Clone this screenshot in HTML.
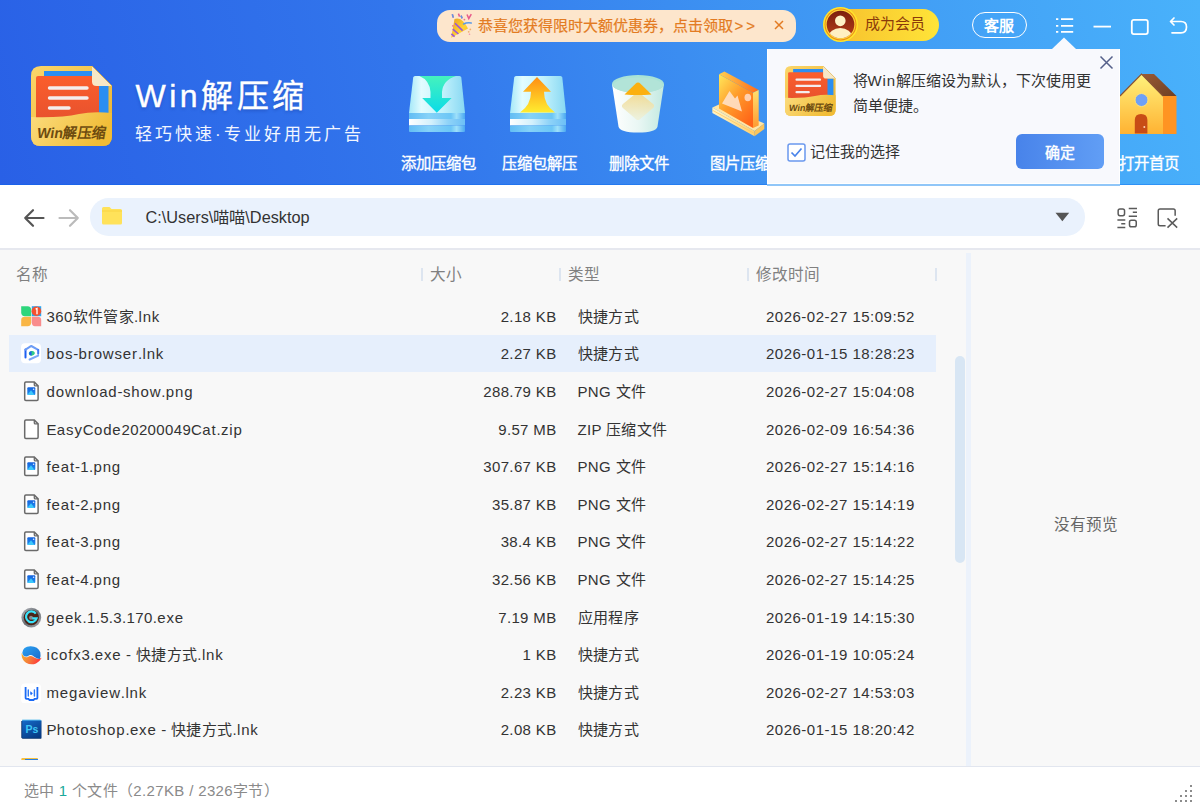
<!DOCTYPE html>
<html lang="zh-CN"><head><meta charset="utf-8">
<style>
*{margin:0;padding:0;box-sizing:border-box}
html,body{width:1200px;height:811px;overflow:hidden;background:#f8f8f8;font-family:"Liberation Sans",sans-serif;color:#333}
svg{display:block}
.abs{position:absolute}
#hdr{position:absolute;left:0;top:0;width:1200px;height:185px;background:linear-gradient(76deg,#2960e6 0%,#3276ec 35%,#3d92f2 62%,#49b2fb 100%)}
#hdrline{position:absolute;left:0;top:184px;width:1200px;height:1.5px;background:rgba(0,100,240,0.35)}
#tb{position:absolute;left:0;top:185px;width:1200px;height:63px;background:#fff}
#tbline{position:absolute;left:0;top:248px;width:1200px;height:2px;background:#e6e8ef}
#list{position:absolute;left:0;top:250px;width:1200px;height:516px;background:#f8f8f8}
#status{position:absolute;left:0;top:766px;width:1200px;height:45px;background:#fff;border-top:1px solid #e2e6ef}
.row{position:absolute;left:0;width:940px;height:37.6px;font-size:15px;color:#333}
.row.sel{left:9px;width:927px;background:#e6effc}
.row.sel span,.row.sel .ic{margin-left:-9px}
.row span{position:absolute;top:10.6px;white-space:nowrap;line-height:17px;letter-spacing:0.35px}
.row b{font-weight:normal;letter-spacing:0.85px}
.row .n{left:46.5px}
.row .s{right:383.5px;text-align:right}
.row.sel .s{right:379.5px;margin-left:0}
.row .t{left:577.5px}
.row .d{left:766px;letter-spacing:0.5px}
.row .ic{position:absolute;left:21px;top:8.5px;width:21px;height:21px}
.hd{position:absolute;top:265.5px;font-size:15.6px;color:#808080;line-height:17px;white-space:nowrap}
.sep{position:absolute;top:268px;width:1.6px;height:13px;background:#dde5f0}
.lbl{position:absolute;top:155px;font-size:15.4px;color:#fff;white-space:nowrap;line-height:17px;-webkit-text-stroke:0.35px #fff}
</style></head><body>
<div id="hdr"></div>
<div id="hdrline"></div>
<!-- logo -->
<svg class="abs" style="left:31px;top:66px" width="81" height="81" viewBox="0 0 81 81">
<defs>
<linearGradient id="lgGold" x1="0" y1="0" x2="1" y2="1"><stop offset="0" stop-color="#fbd66a"/><stop offset="1" stop-color="#e9b02c"/></linearGradient>
<linearGradient id="lgPocket" x1="0" y1="0" x2="1" y2="0.3"><stop offset="0" stop-color="#fbdc7e"/><stop offset="1" stop-color="#f1bc36"/></linearGradient>
<linearGradient id="lgRed" x1="0" y1="0" x2="0" y2="1"><stop offset="0" stop-color="#fb5e2c"/><stop offset="1" stop-color="#e5502e"/></linearGradient>
</defs>
<path d="M10 0H61L81 20V70Q81 80 71 80H10Q0 80 0 70V10Q0 0 10 0Z" fill="url(#lgGold)"/>
<path d="M13 5H61V20H77.5V55H13Z" fill="#2b8ef2"/>
<rect x="5" y="10" width="63" height="50" rx="2" fill="url(#lgRed)"/>
<path d="M18.5 22H56M18.5 32H56M18.5 42H38" stroke="#f4eeee" stroke-width="3.4" stroke-linecap="round"/>
<path d="M0 51Q30 52 48 48Q62 45 81 47V70Q81 80 71 80H10Q0 80 0 70Z" fill="url(#lgPocket)"/>
<path d="M61 0L81 20H65.5Q61 20 61 15.5Z" fill="#f7e7c6"/><path d="M61 0L81 20" stroke="#d9a838" stroke-width="0.8"/>
<text x="5.5" y="71.8" transform="matrix(1 0 -0.16 1 11.5 0)" font-family="Liberation Sans" font-size="14.6" font-weight="bold" fill="#6e4c10" textLength="69" lengthAdjust="spacingAndGlyphs">Win解压缩</text>
</svg>
<div class="abs" style="left:135.5px;top:77px;font-size:32px;color:#fff;letter-spacing:3.5px;line-height:38px;-webkit-text-stroke:0.4px #fff;white-space:nowrap;text-shadow:0 2px 3px rgba(20,50,140,0.35)">Win解压缩</div>
<div class="abs" style="left:135px;top:124.5px;font-size:17px;color:#f2f6ff;letter-spacing:3px;line-height:20px;white-space:nowrap">轻巧快速·专业好用无广告</div>
<!-- promo banner -->
<div class="abs" style="left:437.3px;top:10px;width:359px;height:31.5px;border-radius:13px;background:#fde6cc"></div>
<svg class="abs" style="left:450px;top:13px" width="24" height="26" viewBox="0 0 24 26">
<defs><linearGradient id="pp" x1="0" y1="0" x2="1" y2="1"><stop offset="0" stop-color="#e8a020"/><stop offset="0.6" stop-color="#ffd236"/><stop offset="1" stop-color="#f0b020"/></linearGradient></defs>
<path d="M1.2 24.8L4.5 6Q12 3.5 18 15.5Z" fill="url(#pp)"/>
<path d="M5 10.2L12.6 17.6M2.8 16.2L8.4 21M1.4 20.8L4.6 23.6" stroke="#9b55d8" stroke-width="1.6"/>
<path d="M2.3 1.3L3.3 4.6M8.4 0.6L9.6 3.6M11 2.6L12.2 5.4M17 1.5L18.8 5.5L21.3 1.2" stroke-width="1.5" fill="none" stroke="#e85a8a"/>
<path d="M2.3 1.3L3.3 4.6M11 2.6L12.2 5.4" stroke="#5a9ae8" stroke-width="1.5"/>
<path d="M13.6 11Q17 9.3 21.2 10" stroke="#5a9ae8" stroke-width="1.6" fill="none" stroke-linecap="round"/>
<circle cx="20.3" cy="16.4" r="0.9" fill="#f0b070"/><circle cx="18.7" cy="18.8" r="0.9" fill="#f0b070"/><circle cx="19.5" cy="21.2" r="0.8" fill="#f090b0"/><circle cx="2.9" cy="12.8" r="0.9" fill="#f07090"/><circle cx="14.4" cy="6.6" r="0.9" fill="#f07090"/>
</svg>
<div class="abs" style="left:477.5px;top:17px;font-size:15px;color:#e37b22;line-height:17px;white-space:nowrap;-webkit-text-stroke:0.2px #e37b22">恭喜您获得限时大额优惠券，点击领取<span style="letter-spacing:3px;margin-left:2px">&gt;&gt;</span></div>
<svg class="abs" style="left:774px;top:20px" width="10" height="10" viewBox="0 0 10 10"><path d="M1 1L9 9M9 1L1 9" stroke="#e37b22" stroke-width="1.5"/></svg>
<!-- member -->
<div class="abs" style="left:838px;top:8.6px;width:101px;height:32.6px;border-radius:0 16.3px 16.3px 0;background:linear-gradient(90deg,#f7c22e,#ffe438)"></div>
<svg class="abs" style="left:823px;top:7.3px" width="35" height="35" viewBox="0 0 34.4 34.4">
<defs><linearGradient id="avr" x1="0" y1="0" x2="0" y2="1"><stop offset="0" stop-color="#7c1e0e"/><stop offset="1" stop-color="#b8401a"/></linearGradient>
<clipPath id="avc"><circle cx="17.2" cy="17.2" r="13.6"/></clipPath></defs>
<circle cx="17.2" cy="17.2" r="17.2" fill="#ffe62a"/>
<circle cx="17.2" cy="17.2" r="15.7" fill="#ec8a1a"/>
<circle cx="17.2" cy="17.2" r="14.7" fill="#ffd838"/>
<circle cx="17.2" cy="17.2" r="13.6" fill="url(#avr)"/>
<circle cx="17" cy="13.6" r="5.2" fill="#fff2c6"/>
<ellipse cx="17" cy="29.8" rx="11.6" ry="9.1" fill="#fff0c2" clip-path="url(#avc)"/>
</svg>
<div class="abs" style="left:865px;top:15px;font-size:15px;color:#8a3a0a;line-height:17px;white-space:nowrap">成为会员</div>
<!-- kefu -->
<div class="abs" style="left:971.8px;top:12.3px;width:55.5px;height:25.5px;border:1.8px solid #fff;border-radius:13px"></div>
<div class="abs" style="left:983.5px;top:17px;font-size:15px;color:#fff;font-weight:bold;line-height:17px;white-space:nowrap">客服</div>
<!-- window controls -->
<svg class="abs" style="left:1050px;top:12px" width="145" height="26" viewBox="0 0 145 26">
<path d="M6 7.2H8.3M6 13.9H8.3M6 19.9H8.3M11 7.2H23.2M11 13.9H23.2M11 19.9H23.2" stroke="#fff" stroke-width="1.7"/>
<path d="M43.5 14.6H61" stroke="#fff" stroke-width="1.8"/>
<rect x="81.8" y="7.8" width="16" height="14.3" rx="2" fill="none" stroke="#fff" stroke-width="1.8"/>
<path d="M124 6L120.5 9.5L124 13M121 9.5H131Q136.5 9.5 136.5 15Q136.5 20.8 131 20.8H122" fill="none" stroke="#fff" stroke-width="1.7" stroke-linejoin="round" stroke-linecap="round"/>
</svg>

<div id="tb"></div>
<div id="tbline"></div>
<svg class="abs" style="left:22px;top:207px" width="60" height="22" viewBox="0 0 60 22">
<path d="M11 3.2L3.2 11L11 18.8M3.2 11H21.5" fill="none" stroke="#555" stroke-width="2.2" stroke-linecap="round" stroke-linejoin="round"/>
<path d="M48 3.2L55.8 11L48 18.8M55.8 11H37.5" fill="none" stroke="#bbb" stroke-width="2.2" stroke-linecap="round" stroke-linejoin="round"/>
</svg>
<div class="abs" style="left:89.5px;top:198.2px;width:995px;height:37.4px;border-radius:18.7px;background:#eaf2fd"></div>
<svg class="abs" style="left:101px;top:206px" width="22" height="19" viewBox="0 0 22 19">
<path d="M1 2.5Q1 1 2.5 1H8.5L10.5 3H19.5Q21 3 21 4.5V17Q21 18.5 19.5 18.5H2.5Q1 18.5 1 17Z" fill="#ffe25a"/>
<path d="M1 5H21" stroke="#f8d23c" stroke-width="0.8"/>
</svg>
<div class="abs" style="left:145.5px;top:208px;font-size:16.3px;color:#333;line-height:19px;white-space:nowrap">C:\Users\喵喵\Desktop</div>
<svg class="abs" style="left:1055px;top:212px" width="15" height="10" viewBox="0 0 15 10"><path d="M0.5 0.8H14.2L7.35 9.3Z" fill="#555"/></svg>
<svg class="abs" style="left:1116px;top:207px" width="64" height="23" viewBox="0 0 64 23">
<g fill="none" stroke="#5a5a5a" stroke-width="1.5">
<rect x="2.15" y="2" width="6.4" height="6.65" rx="1.8"/>
<path d="M12.75 1.4H21M16.8 5.3H21M12.75 9.25H21M1.4 13H9.3M5.25 16.75H9.3M1.4 20.5H9.3"/>
<rect x="13.5" y="13.25" width="6.75" height="6.6" rx="1.8"/>
<path d="M49.6 18.65H44Q42.25 18.65 42.25 16.9V3.75Q42.25 2 44 2H57.4Q59.15 2 59.15 3.75V8.75"/>
<path d="M51.5 11.4L61.2 20.6M61.2 11.4L51.5 20.6"/>
</g>
</svg>

<div id="list"></div>
<div class="hd" style="left:16px">名称</div>
<div class="sep" style="left:421px"></div><div class="hd" style="left:430px">大小</div>
<div class="sep" style="left:559px"></div><div class="hd" style="left:567.5px">类型</div>
<div class="sep" style="left:747px"></div><div class="hd" style="left:756px">修改时间</div>
<div class="sep" style="left:935px"></div>

<div class="row" style="top:297.3px"><svg class="ic" viewBox="0 0 21 21"><path d="M0.2 0.2H6.5Q10.2 0.2 10.2 4V10.2H4Q0.2 10.2 0.2 6.5Z" fill="#2ed67c"/><path d="M10.8 0.2H20.2V10.2H10.8Z" fill="#2aa6f2"/><path d="M0.2 20.2V14Q0.2 10.8 4 10.8H10.2V16.5Q10.2 20.2 6.5 20.2Z" fill="#f9b646"/><path d="M20.2 20.2V14Q20.2 10.8 16.5 10.8H10.8V16.5Q10.8 20.2 14 20.2Z" fill="#f98c8c"/><circle cx="15.4" cy="5.2" r="4.8" fill="#f4512e"/><path d="M14.6 3.2L16 2.6V8.2" fill="none" stroke="#fff" stroke-width="1.3"/></svg><span class="n">360软件管家.<b>lnk</b></span><span class="s">2.18 KB</span><span class="t">快捷方式</span><span class="d">2026-02-27 15:09:52</span></div>
<div class="row sel" style="top:334.90000000000003px"><svg class="ic" viewBox="0 0 21 21"><rect x="0" y="0.3" width="20" height="20" rx="4" fill="#fff"/><g fill="none" stroke-width="2" stroke-linecap="round"><path d="M4.5 6.6V14.4" stroke="#1d5ff2"/><path d="M4.5 6.6L9.5 3.3" stroke="#6a9af6"/><path d="M10.3 3L17.2 6.8" stroke="#6d9df6"/><path d="M17.2 7V10.8" stroke="#3f7af4"/><path d="M8.6 16.5L17.2 12.6" stroke="#7ba7f7"/></g><ellipse cx="10.8" cy="10.3" rx="3" ry="2.3" transform="rotate(-15 10.8 10.3)" fill="#2ecb8a"/><path d="M8 10.8Q7.8 8.6 10.5 8L10.6 12.6Q8.3 12.8 8 10.8Z" fill="#1f5fe8"/></svg><span class="n"><b>bos</b>-<b>browser</b>.<b>lnk</b></span><span class="s">2.27 KB</span><span class="t">快捷方式</span><span class="d">2026-01-15 18:28:23</span></div>
<div class="row" style="top:372.5px"><svg class="ic" viewBox="0 0 21 21"><path d="M4.9 1.1H13.3L17.1 4.9V18.2Q17.1 19.4 15.9 19.4H4.9Q3.7 19.4 3.7 18.2V2.3Q3.7 1.1 4.9 1.1Z" fill="#fff" stroke="#6a6a6a" stroke-width="1.5"/><path d="M13.3 1.1V3.9Q13.3 4.9 14.3 4.9H17.1" fill="none" stroke="#6a6a6a" stroke-width="1.3"/><defs><linearGradient id="pg" x1="0" y1="0" x2="0" y2="1"><stop offset="0" stop-color="#1462de"/><stop offset="1" stop-color="#1e8ef0"/></linearGradient></defs><rect x="6.3" y="6.3" width="8" height="7.8" rx="1" fill="url(#pg)"/><path d="M6.3 14.1L10 9.2L13.5 14.1Z" fill="#3cc8fb"/><circle cx="12.6" cy="8.3" r="0.8" fill="#e0e8ff"/></svg><span class="n"><b>download</b>-<b>show</b>.<b>png</b></span><span class="s">288.79 KB</span><span class="t">PNG 文件</span><span class="d">2026-02-27 15:04:08</span></div>
<div class="row" style="top:410.1px"><svg class="ic" viewBox="0 0 21 21"><path d="M4.9 1.1H13.3L17.1 4.9V18.2Q17.1 19.4 15.9 19.4H4.9Q3.7 19.4 3.7 18.2V2.3Q3.7 1.1 4.9 1.1Z" fill="#fff" stroke="#6a6a6a" stroke-width="1.5"/><path d="M13.3 1.1V3.9Q13.3 4.9 14.3 4.9H17.1" fill="none" stroke="#6a6a6a" stroke-width="1.3"/></svg><span class="n">E<b>asy</b>C<b>ode</b>20200049C<b>at</b>.<b>zip</b></span><span class="s">9.57 MB</span><span class="t">ZIP 压缩文件</span><span class="d">2026-02-09 16:54:36</span></div>
<div class="row" style="top:447.70000000000005px"><svg class="ic" viewBox="0 0 21 21"><path d="M4.9 1.1H13.3L17.1 4.9V18.2Q17.1 19.4 15.9 19.4H4.9Q3.7 19.4 3.7 18.2V2.3Q3.7 1.1 4.9 1.1Z" fill="#fff" stroke="#6a6a6a" stroke-width="1.5"/><path d="M13.3 1.1V3.9Q13.3 4.9 14.3 4.9H17.1" fill="none" stroke="#6a6a6a" stroke-width="1.3"/><defs><linearGradient id="pg" x1="0" y1="0" x2="0" y2="1"><stop offset="0" stop-color="#1462de"/><stop offset="1" stop-color="#1e8ef0"/></linearGradient></defs><rect x="6.3" y="6.3" width="8" height="7.8" rx="1" fill="url(#pg)"/><path d="M6.3 14.1L10 9.2L13.5 14.1Z" fill="#3cc8fb"/><circle cx="12.6" cy="8.3" r="0.8" fill="#e0e8ff"/></svg><span class="n"><b>feat</b>-1.<b>png</b></span><span class="s">307.67 KB</span><span class="t">PNG 文件</span><span class="d">2026-02-27 15:14:16</span></div>
<div class="row" style="top:485.3px"><svg class="ic" viewBox="0 0 21 21"><path d="M4.9 1.1H13.3L17.1 4.9V18.2Q17.1 19.4 15.9 19.4H4.9Q3.7 19.4 3.7 18.2V2.3Q3.7 1.1 4.9 1.1Z" fill="#fff" stroke="#6a6a6a" stroke-width="1.5"/><path d="M13.3 1.1V3.9Q13.3 4.9 14.3 4.9H17.1" fill="none" stroke="#6a6a6a" stroke-width="1.3"/><defs><linearGradient id="pg" x1="0" y1="0" x2="0" y2="1"><stop offset="0" stop-color="#1462de"/><stop offset="1" stop-color="#1e8ef0"/></linearGradient></defs><rect x="6.3" y="6.3" width="8" height="7.8" rx="1" fill="url(#pg)"/><path d="M6.3 14.1L10 9.2L13.5 14.1Z" fill="#3cc8fb"/><circle cx="12.6" cy="8.3" r="0.8" fill="#e0e8ff"/></svg><span class="n"><b>feat</b>-2.<b>png</b></span><span class="s">35.87 KB</span><span class="t">PNG 文件</span><span class="d">2026-02-27 15:14:19</span></div>
<div class="row" style="top:522.9000000000001px"><svg class="ic" viewBox="0 0 21 21"><path d="M4.9 1.1H13.3L17.1 4.9V18.2Q17.1 19.4 15.9 19.4H4.9Q3.7 19.4 3.7 18.2V2.3Q3.7 1.1 4.9 1.1Z" fill="#fff" stroke="#6a6a6a" stroke-width="1.5"/><path d="M13.3 1.1V3.9Q13.3 4.9 14.3 4.9H17.1" fill="none" stroke="#6a6a6a" stroke-width="1.3"/><defs><linearGradient id="pg" x1="0" y1="0" x2="0" y2="1"><stop offset="0" stop-color="#1462de"/><stop offset="1" stop-color="#1e8ef0"/></linearGradient></defs><rect x="6.3" y="6.3" width="8" height="7.8" rx="1" fill="url(#pg)"/><path d="M6.3 14.1L10 9.2L13.5 14.1Z" fill="#3cc8fb"/><circle cx="12.6" cy="8.3" r="0.8" fill="#e0e8ff"/></svg><span class="n"><b>feat</b>-3.<b>png</b></span><span class="s">38.4 KB</span><span class="t">PNG 文件</span><span class="d">2026-02-27 15:14:22</span></div>
<div class="row" style="top:560.5px"><svg class="ic" viewBox="0 0 21 21"><path d="M4.9 1.1H13.3L17.1 4.9V18.2Q17.1 19.4 15.9 19.4H4.9Q3.7 19.4 3.7 18.2V2.3Q3.7 1.1 4.9 1.1Z" fill="#fff" stroke="#6a6a6a" stroke-width="1.5"/><path d="M13.3 1.1V3.9Q13.3 4.9 14.3 4.9H17.1" fill="none" stroke="#6a6a6a" stroke-width="1.3"/><defs><linearGradient id="pg" x1="0" y1="0" x2="0" y2="1"><stop offset="0" stop-color="#1462de"/><stop offset="1" stop-color="#1e8ef0"/></linearGradient></defs><rect x="6.3" y="6.3" width="8" height="7.8" rx="1" fill="url(#pg)"/><path d="M6.3 14.1L10 9.2L13.5 14.1Z" fill="#3cc8fb"/><circle cx="12.6" cy="8.3" r="0.8" fill="#e0e8ff"/></svg><span class="n"><b>feat</b>-4.<b>png</b></span><span class="s">32.56 KB</span><span class="t">PNG 文件</span><span class="d">2026-02-27 15:14:25</span></div>
<div class="row" style="top:598.1px"><svg class="ic" viewBox="0 0 21 21"><defs><linearGradient id="gk" x1="0" y1="0" x2="1" y2="1"><stop offset="0" stop-color="#b8bcc2"/><stop offset="0.5" stop-color="#6a6e74"/><stop offset="1" stop-color="#a8acb2"/></linearGradient></defs><circle cx="10.3" cy="10.6" r="9.9" fill="url(#gk)"/><circle cx="10.3" cy="10.6" r="7.6" fill="#4a2418"/><circle cx="10" cy="10.8" r="2" fill="#8a8a90"/><path d="M14.8 6.6A5.4 5.4 0 1 0 15.6 11.3H11.2" fill="none" stroke="#3ae2fa" stroke-width="2.2"/></svg><span class="n"><b>geek</b>.1.5.3.170.<b>exe</b></span><span class="s">7.19 MB</span><span class="t">应用程序</span><span class="d">2026-01-19 14:15:30</span></div>
<div class="row" style="top:635.7px"><svg class="ic" viewBox="0 0 21 21"><defs><linearGradient id="ix" x1="0" y1="0" x2="1" y2="0.3"><stop offset="0" stop-color="#f2b22c"/><stop offset="0.55" stop-color="#f57a3a"/><stop offset="1" stop-color="#ff3a3a"/></linearGradient><linearGradient id="ixb" x1="0" y1="0" x2="1" y2="1"><stop offset="0" stop-color="#2ba2f2"/><stop offset="1" stop-color="#1a6ccc"/></linearGradient></defs><path d="M0.6 9Q0.2 15.5 5 18.8Q10 21.5 15 19.5Q18.5 18 20.7 13.8Q16.5 15.8 12.8 13.3Q9.5 11 6.8 13Q3 14.2 0.6 9Z" fill="url(#ix)"/><path d="M1.3 9Q1.8 2.6 9.5 2.3Q17 2.2 19.3 8.3Q20 11.5 18.8 15Q15.5 14.8 12.8 12.5Q9.5 9.8 6.8 12.2Q2.5 13.8 1.3 9Z" fill="url(#ixb)"/></svg><span class="n"><b>icofx</b>3.<b>exe</b> - 快捷方式.<b>lnk</b></span><span class="s">1 KB</span><span class="t">快捷方式</span><span class="d">2026-01-19 10:05:24</span></div>
<div class="row" style="top:673.3px"><svg class="ic" viewBox="0 0 21 21"><rect x="0" y="1.5" width="20" height="20" rx="4" fill="#fff"/><path d="M4.6 5V16Q4.6 16.8 5.5 16.8H7.5L8.5 18H12.5L13.5 16.8H15.5Q16.4 16.8 16.4 16V5" fill="none" stroke="#1a6af5" stroke-width="1.8"/><path d="M7.3 8V14M13.4 8V14" stroke="#2a78f6" stroke-width="1.4" stroke-linecap="round"/><path d="M9.3 9.3L11.8 11.3L10 13.2Q8.8 12 9.3 9.3Z" fill="#1a6af5"/></svg><span class="n"><b>megaview</b>.<b>lnk</b></span><span class="s">2.23 KB</span><span class="t">快捷方式</span><span class="d">2026-02-27 14:53:03</span></div>
<div class="row" style="top:710.9000000000001px"><svg class="ic" viewBox="0 0 21 21"><defs><linearGradient id="psg" x1="0.2" y1="0" x2="0.8" y2="1"><stop offset="0" stop-color="#1467c4"/><stop offset="1" stop-color="#063a82"/></linearGradient></defs><path d="M0.3 2V18.8L1.5 19.8H20.3V2Z" fill="#06306c"/><rect x="1.2" y="1.1" width="19.1" height="17.8" fill="url(#psg)"/><path d="M1.2 1.1H19.2L20.3 2" stroke="#4ab8f0" stroke-width="0.9" fill="none"/><text x="10.8" y="14.3" font-size="10.5" font-weight="bold" fill="#3ec6f6" text-anchor="middle" font-family="Liberation Sans">Ps</text></svg><span class="n">P<b>hotoshop</b>.<b>exe</b> - 快捷方式.<b>lnk</b></span><span class="s">2.08 KB</span><span class="t">快捷方式</span><span class="d">2026-01-15 18:20:42</span></div>
<div class="row" style="top:748.5px;height:11.5px;overflow:hidden"><svg class="ic" style="top:9px" viewBox="0 0 21 21"><rect x="0.3" y="0" width="16.7" height="3" rx="1" fill="#f5c040"/><rect x="4" y="1" width="13" height="2" fill="#2a80e0"/></svg></div>
<div class="abs" style="left:955.3px;top:356.4px;width:10.2px;height:206.6px;border-radius:5px;background:#d8e6f4"></div>
<div class="abs" style="left:965.5px;top:253px;width:5px;height:513px;background:#ecf2fb"></div>
<div class="abs" style="left:1054px;top:516px;font-size:15.6px;color:#666;line-height:17px;white-space:nowrap">没有预览</div>

<div id="status"></div>
<div class="abs" style="left:23.5px;top:781.5px;font-size:15px;color:#8a8a8a;line-height:17px;white-space:nowrap;letter-spacing:0.35px">选中 <span style="color:#1aa99b">1</span> 个文件（2.27KB / 2326字节）</div>
<svg class="abs" style="left:1172px;top:783px" width="22" height="22" viewBox="0 0 22 22" fill="#8c8c8c">
<rect x="18" y="2" width="2" height="2"/><rect x="18" y="7" width="2" height="2"/><rect x="13" y="7" width="2" height="2"/>
<rect x="18" y="12" width="2" height="2"/><rect x="13" y="12" width="2" height="2"/><rect x="8" y="12" width="2" height="2"/>
<rect x="18" y="17" width="2" height="2"/><rect x="13" y="17" width="2" height="2"/><rect x="8" y="17" width="2" height="2"/><rect x="3" y="17" width="2" height="2"/>
</svg>

<!-- add -->
<svg class="abs" style="left:409px;top:76px" width="57" height="57" viewBox="0 0 57 57">
<defs>
<linearGradient id="bxTop" x1="0" y1="0" x2="1" y2="0"><stop offset="0" stop-color="#a4e8f8"/><stop offset="0.22" stop-color="#e2fcff"/><stop offset="0.6" stop-color="#c2f2fc"/><stop offset="1" stop-color="#88d8f3"/></linearGradient>
<linearGradient id="bxBand" x1="0" y1="0" x2="1" y2="0"><stop offset="0" stop-color="#ffffff"/><stop offset="0.4" stop-color="#d2f0fc"/><stop offset="0.7" stop-color="#8fd3f8"/><stop offset="1" stop-color="#6cc0f6"/></linearGradient>
<linearGradient id="bxS1" x1="0" y1="0" x2="1" y2="0"><stop offset="0" stop-color="#62bdf4"/><stop offset="0.35" stop-color="#86d2f8"/><stop offset="0.75" stop-color="#6cc6f6"/><stop offset="0.85" stop-color="#9ee0fa"/><stop offset="1" stop-color="#4aa8f2"/></linearGradient>
<linearGradient id="arDn" x1="0" y1="0" x2="0" y2="1"><stop offset="0" stop-color="#45f2bd"/><stop offset="1" stop-color="#0adbe8"/></linearGradient>
<linearGradient id="arUp" x1="0" y1="0" x2="0" y2="1"><stop offset="0" stop-color="#ff8e12"/><stop offset="1" stop-color="#ffec30"/></linearGradient>
</defs>
<path d="M6 0H50.5Q52 0 52.3 1.5L56 37H0L4.2 1.5Q4.5 0 6 0Z" fill="url(#bxTop)"/>
<path d="M10.3 0H47Q34 4 33 16V22.1H42.6L27.8 36.8L13.2 22.1H21.5V16Q20.5 4 10.3 0Z" fill="url(#arDn)"/>
<rect x="0" y="37" width="56" height="6" fill="url(#bxS1)"/>
<rect x="0" y="43" width="56" height="6.5" fill="url(#bxBand)"/>
<rect x="0" y="49.5" width="56" height="6.5" rx="1" fill="url(#bxS1)"/>
</svg>
<div class="lbl" style="left:401px">添加压缩包</div>
<!-- extract -->
<svg class="abs" style="left:510px;top:76px" width="57" height="57" viewBox="0 0 57 57">
<path d="M6 0H50.5Q52 0 52.3 1.5L56 37H0L4.2 1.5Q4.5 0 6 0Z" fill="url(#bxTop)"/>
<path d="M27 1L41 15.8H34Q34 29 45 36.4H10Q21 29 21 15.8H13Z" fill="url(#arUp)"/>
<rect x="0" y="37" width="56" height="6" fill="url(#bxS1)"/>
<rect x="0" y="43" width="56" height="6.5" fill="url(#bxBand)"/>
<rect x="0" y="49.5" width="56" height="6.5" rx="1" fill="url(#bxS1)"/>
</svg>
<div class="lbl" style="left:502px">压缩包解压</div>
<!-- trash -->
<svg class="abs" style="left:611px;top:74px" width="54" height="60" viewBox="0 0 54 60">
<defs>
<linearGradient id="trB" x1="0" y1="0" x2="1" y2="0"><stop offset="0" stop-color="#ffffff"/><stop offset="0.5" stop-color="#eaf7f4"/><stop offset="1" stop-color="#c2e9e0"/></linearGradient>
<linearGradient id="trD" x1="0" y1="0" x2="0" y2="1"><stop offset="0" stop-color="#f3d98c"/><stop offset="1" stop-color="#eef0d6"/></linearGradient>
</defs>
<path d="M1 10L7.5 52.5Q9 58.5 27 58.5Q45 58.5 46.5 52.5L53 10Z" fill="url(#trB)"/>
<ellipse cx="27" cy="10" rx="26" ry="9" fill="#a9e3d6"/>
<ellipse cx="27" cy="11.2" rx="24.5" ry="7.8" fill="#b2e4d8"/>
<path d="M27 21L40.5 32L27 43.5L13.5 32Z" fill="url(#trD)" stroke="url(#trD)" stroke-width="5" stroke-linejoin="round" opacity="0.85"/>
<path d="M13.5 20.5L24.5 9.8Q27 7.4 29.5 9.8L40.5 20.5Q27 21.5 13.5 20.5Z" fill="#fbb010"/>
</svg>
<div class="lbl" style="left:609px">删除文件</div>
<!-- image -->
<svg class="abs" style="left:711px;top:70px" width="56" height="68" viewBox="0 0 56 68">
<defs>
<linearGradient id="imF" x1="0" y1="0" x2="0.8" y2="1"><stop offset="0" stop-color="#ffe85a"/><stop offset="0.5" stop-color="#ff9a2a"/><stop offset="1" stop-color="#ff6418"/></linearGradient>
<linearGradient id="imT" x1="0" y1="0" x2="1" y2="0"><stop offset="0" stop-color="#ffd050"/><stop offset="1" stop-color="#ff6a1a"/></linearGradient>
<linearGradient id="imR" x1="0" y1="0" x2="0" y2="1"><stop offset="0" stop-color="#ffe070"/><stop offset="1" stop-color="#ff9a30"/></linearGradient>
<linearGradient id="imS" x1="0" y1="0" x2="1" y2="0"><stop offset="0" stop-color="#fff4c8"/><stop offset="1" stop-color="#ffd070"/></linearGradient>
</defs>
<path d="M1.4 37.6L8 34.5L53.3 53.5L43.5 61Z" fill="#ffe6a6"/>
<path d="M1.4 37.6L43.5 61V66.3L1.4 43Z" fill="url(#imS)"/>
<path d="M1.4 40.2L43.5 63.6" stroke="#ffc860" stroke-width="0.8"/>
<path d="M43.5 61L53.3 53.5V58.9L43.5 66.3Z" fill="#f9c55e"/>
<path d="M8 4.3L42 22.8V58L8 38.5Z" fill="url(#imF)"/>
<path d="M8 4.3L13.4 1.5L47.7 20L42 22.8Z" fill="url(#imT)"/>
<path d="M42 22.8L47.7 20V55.5L42 58Z" fill="url(#imR)"/>
<path d="M11 33.5L18.5 21L24 28.5L26.5 25.5L31 41.5Z" fill="#ffe0c4" opacity="0.92"/>
<ellipse cx="36.8" cy="27.5" rx="3.3" ry="3.8" fill="#ffd6bc" opacity="0.92"/>
</svg>
<div class="lbl" style="left:710px">图片压缩</div>
<!-- house -->
<svg class="abs" style="left:1114px;top:72px" width="64" height="64" viewBox="0 0 64 64">
<defs>
<linearGradient id="hsF" x1="0" y1="0" x2="0" y2="1"><stop offset="0" stop-color="#fff27c"/><stop offset="1" stop-color="#ffb232"/></linearGradient>
<linearGradient id="hsR" x1="0" y1="0" x2="1" y2="1"><stop offset="0" stop-color="#9a5a34"/><stop offset="1" stop-color="#6e3f24"/></linearGradient>
</defs>
<path d="M48.5 24H62.5V62H48.5Z" fill="#ff9422"/>
<path d="M27.5 2H40L62.5 24H48.5Z" fill="url(#hsR)"/>
<path d="M6 24L27.5 2L49 24V62H6Z" fill="url(#hsF)"/>
<path d="M6 24L27.5 2L49 24" fill="none" stroke="#8a5232" stroke-width="1.2"/>
<circle cx="27.5" cy="28" r="6.5" fill="#6ea0f6"/>
<circle cx="27.5" cy="28" r="6.5" fill="none" stroke="#ffe27a" stroke-width="1"/>
<path d="M20.8 61.5V48Q20.8 42 27 42Q33.4 42 33.4 48V61.5Z" fill="#c84c16"/>
<circle cx="30.3" cy="55" r="1" fill="#ffd0b0"/>
</svg>
<div class="lbl" style="left:1119px">打开首页</div>

<div class="abs" style="left:766.5px;top:48.5px;width:353.5px;height:135.5px;background:#f8f9fd;border:1.5px solid #fff;border-top:none"></div>
<div class="abs" style="left:766.5px;top:184px;width:353.5px;height:1.5px;background:#90c6f8"></div>
<svg class="abs" style="left:1052px;top:37px" width="24" height="12" viewBox="0 0 24 12"><path d="M0 12L12 0.5L24 12Z" fill="#f8f9fd"/></svg>
<svg class="abs" style="left:1098.5px;top:55px" width="15" height="15" viewBox="0 0 15 15"><path d="M1.5 1.5L13.5 13.5M13.5 1.5L1.5 13.5" stroke="#55608a" stroke-width="1.5"/></svg>
<svg class="abs" style="left:785px;top:66px" width="50.6" height="50.6" viewBox="0 0 81 81">
<path d="M10 0H61L81 20V70Q81 80 71 80H10Q0 80 0 70V10Q0 0 10 0Z" fill="url(#lgGold)"/>
<path d="M13 5H61V20H77.5V55H13Z" fill="#2b8ef2"/>
<rect x="5" y="10" width="63" height="50" rx="2" fill="url(#lgRed)"/>
<path d="M18.5 22H56M18.5 32H56M18.5 42H38" stroke="#f4eeee" stroke-width="3.6" stroke-linecap="round"/>
<path d="M0 51Q30 52 48 48Q62 45 81 47V70Q81 80 71 80H10Q0 80 0 70Z" fill="url(#lgPocket)"/>
<path d="M61 0L81 20H65.5Q61 20 61 15.5Z" fill="#f7e7c6"/><path d="M61 0L81 20" stroke="#d9a838" stroke-width="0.8"/>
<text x="5.5" y="71.8" transform="matrix(1 0 -0.16 1 11.5 0)" font-family="Liberation Sans" font-size="14.6" font-weight="bold" fill="#6e4c10" textLength="69" lengthAdjust="spacingAndGlyphs">Win解压缩</text>
</svg>
<div class="abs" style="left:852.5px;top:69px;width:250px;font-size:15px;color:#333;line-height:24.5px">将<span style="letter-spacing:0.9px">Win</span>解压缩设为默认，下次使用更简单便捷。</div>
<svg class="abs" style="left:787px;top:142.5px" width="19" height="19" viewBox="0 0 19 19"><rect x="1" y="1" width="17" height="17" rx="2" fill="#fff" stroke="#6a98ee" stroke-width="1.5"/><path d="M4.5 9.5L8 13L14.5 5.5" fill="none" stroke="#4a84ea" stroke-width="1.7"/></svg>
<div class="abs" style="left:810px;top:143px;font-size:15px;color:#333;line-height:17px;white-space:nowrap">记住我的选择</div>
<div class="abs" style="left:1015.6px;top:133.8px;width:88.5px;height:35.2px;border-radius:6px;background:linear-gradient(90deg,#4883ea,#619ef5);color:#fff;font-size:15px;line-height:38px;text-align:center;-webkit-text-stroke:0.45px #fff">确定</div>

</body></html>
